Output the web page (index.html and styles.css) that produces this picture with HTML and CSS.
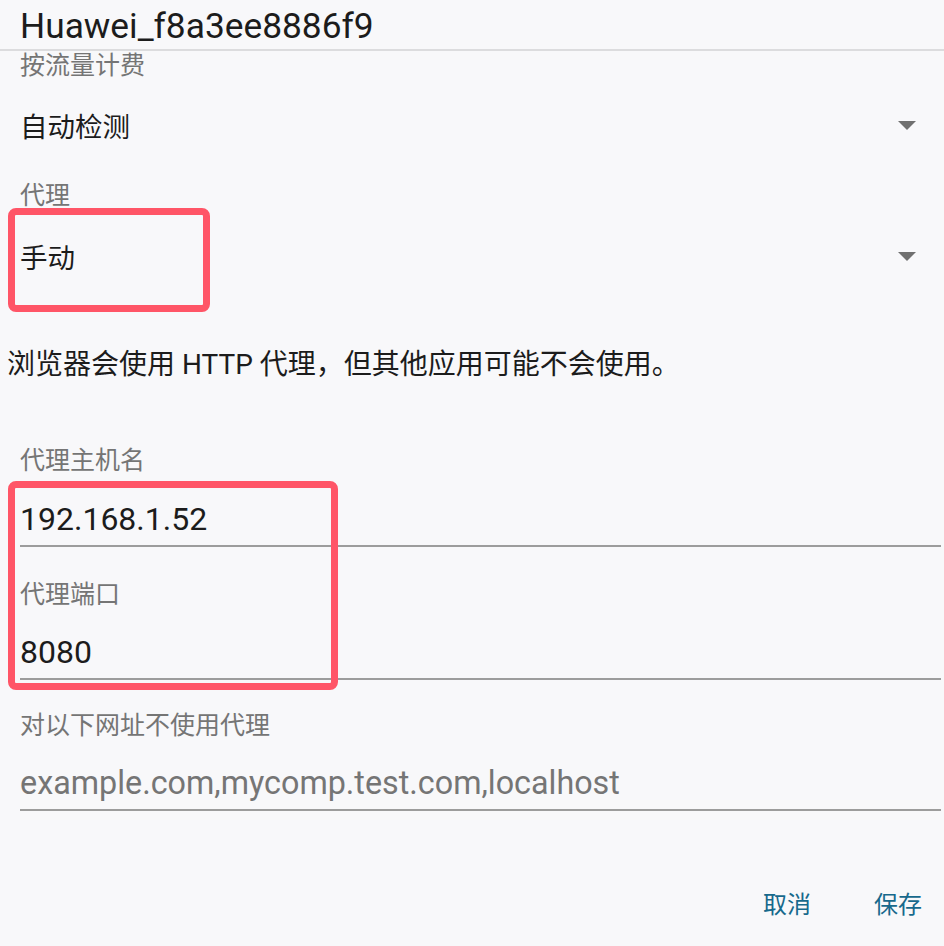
FILE: index.html
```html
<!DOCTYPE html>
<html lang="zh-CN">
<head>
<meta charset="utf-8">
<title>Proxy settings</title>
<link rel="stylesheet" href="styles.css">
</head>
<body>
<div class="dialog">
  <div class="header">Huawei_f8a3ee8886f9</div>
  <div class="label label-first">按流量计费</div>
  <div class="select select-first"><span>自动检测</span><i class="caret"></i></div>
  <div class="label label-proxy">代理</div>
  <div class="select select-second"><span>手动</span><i class="caret"></i></div>
  <div class="help">浏览器会使用 HTTP 代理，但其他应用可能不会使用。</div>
  <div class="label label-host">代理主机名</div>
  <div class="input input-host">192.168.1.52</div>
  <div class="label label-port">代理端口</div>
  <div class="input">8080</div>
  <div class="label label-bypass">对以下网址不使用代理</div>
  <div class="input placeholder">example.com,mycomp.test.com,localhost</div>
  <div class="actions">
    <span class="btn">取消</span>
    <span class="btn">保存</span>
  </div>
  <div class="mark mark-mode"></div>
  <div class="mark mark-fields"></div>
</div>
</body>
</html>
```

FILE: styles.css
```css
html, body {
  margin: 0;
  padding: 0;
  background: #f8f8fa;
}
body {
  font-family: Roboto, "Noto Sans CJK SC", sans-serif;
  color: #212121;
}
.dialog {
  position: relative;
  width: 944px;
  height: 946px;
  overflow: hidden;
}
.header {
  height: 49px;
  line-height: 52px;
  padding-left: 20px;
  font-size: 35.3px;
  border-bottom: 2px solid #dcdcde;
  color: #1c1c1c;
}
.label {
  padding-left: 20px;
  height: 30px;
  line-height: 30px;
  font-size: 25px;
  color: #757575;
}
.label-proxy {
  height: 54px;
  line-height: 54px;
}
.label-host { margin-top: 51px; }
.label-port { margin-top: 33px; }
.label-bypass { margin-top: 31px; }
.select {
  display: flex;
  align-items: center;
  justify-content: space-between;
  padding-left: 20px;
  padding-right: 28px;
  font-size: 27.5px;
  color: #1c1c1c;
}
.select-first { height: 88px; }
.select-second { height: 66px; }
.caret {
  width: 0;
  height: 0;
  border-left: 9.5px solid transparent;
  border-right: 9.5px solid transparent;
  border-top: 9px solid #707070;
}
.help {
  margin-top: 46px;
  height: 60px;
  line-height: 60px;
  padding-left: 7px;
  font-size: 28px;
  color: #1c1c1c;
}
.input {
  margin-left: 20px;
  margin-right: 3px;
  padding-top: 17px;
  height: 51px;
  line-height: 51px;
  font-size: 32px;
  color: #1c1c1c;
  border-bottom: 2px solid #9c9c9c;
}
.input-host {
  padding-top: 18px;
}
.placeholder {
  color: #757575;
  font-size: 32.3px;
}
.actions {
  margin-top: 66px;
  height: 50px;
  display: flex;
  justify-content: flex-end;
  align-items: center;
  gap: 63px;
  padding-right: 22px;
}
.btn {
  font-size: 24px;
  color: #17698c;
}
.mark {
  position: absolute;
  box-sizing: border-box;
  border: 7px solid #ff5567;
  border-radius: 8px;
}
.mark-mode {
  left: 8px;
  top: 208px;
  width: 202px;
  height: 104px;
}
.mark-fields {
  left: 8px;
  top: 481px;
  width: 330px;
  height: 209px;
}
```
